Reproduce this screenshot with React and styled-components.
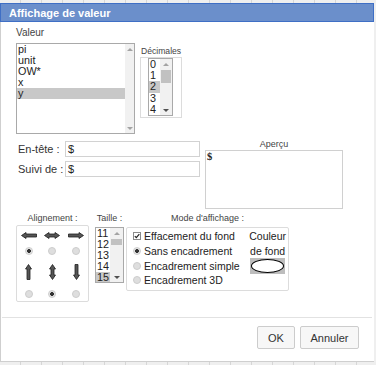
import React from 'react'
import styled, { createGlobalStyle } from 'styled-components'

const GlobalStyle = createGlobalStyle`
    html, body {
        margin: 0;
        padding: 0;
    }
    body {
        width: 376px;
        height: 365px;
        overflow: hidden;
        background-color: #efefef;
        background-image: repeating-linear-gradient(90deg, transparent 0 20px, #d6d6d6 20px 21px);
        font-family: "Liberation Sans", Arial, sans-serif;
        -webkit-font-smoothing: antialiased;
    }
`

const valeurs = ['pi', 'unit', 'OW*', 'x', 'y']
const decimales = ['0', '1', '2', '3', '4']
const tailles = ['11', '12', '13', '14', '15']
const modes = [
    { label: 'Effacement du fond', kind: 'check' },
    { label: 'Sans encadrement', kind: 'radio', on: true },
    { label: 'Encadrement simple', kind: 'radio' },
    { label: 'Encadrement 3D', kind: 'radio' },
]

const arrowPaths = {
    left: 'M0.5 3.5 L5 0.5 L5 2 L15.5 2 L15.5 5 L5 5 L5 6.5 Z',
    both: 'M0.5 3.5 L5 0.5 L5 2 L11 2 L11 0.5 L15.5 3.5 L11 6.5 L11 5 L5 5 L5 6.5 Z',
    right: 'M15.5 3.5 L11 0.5 L11 2 L0.5 2 L0.5 5 L11 5 L11 6.5 Z',
    up: 'M3.5 0.5 L6.5 5 L5 5 L5 15.5 L2 15.5 L2 5 L0.5 5 Z',
    vboth: 'M3.5 0.5 L6.5 5 L5 5 L5 11 L6.5 11 L3.5 15.5 L0.5 11 L2 11 L2 5 L0.5 5 Z',
    down: 'M3.5 15.5 L6.5 11 L5 11 L5 0.5 L2 0.5 L2 11 L0.5 11 Z',
}

function Arrow({ dir }) {
    const vertical = dir === 'up' || dir === 'down' || dir === 'vboth'
    const w = vertical ? 7 : 16
    const h = vertical ? 16 : 7
    return (
        <svg width={w} height={h} viewBox={`0 0 ${w} ${h}`}>
            <path d={arrowPaths[dir]} fill="#555" stroke="#1f1f1f" strokeWidth="0.8" strokeLinejoin="round" />
        </svg>
    )
}

function ScrollBar({ width, thumbTop, thumbHeight, downDark }) {
    return (
        <Scroll width={width}>
            <ArrowCell><TriUp /></ArrowCell>
            <Track>
                {thumbHeight && <Thumb style={{ marginTop: thumbTop, height: thumbHeight }} />}
            </Track>
            <ArrowCell><TriDown dark={downDark} /></ArrowCell>
        </Scroll>
    )
}

function List({ items, selected, width, height, itemHeight, scrollWidth, thumbTop, thumbHeight, downDark }) {
    return (
        <ListBox width={width} height={height}>
            <Items>
                {items.map((it) => (
                    <Item key={it} h={itemHeight} active={it === selected}>{it}</Item>
                ))}
            </Items>
            <ScrollBar width={scrollWidth} thumbTop={thumbTop} thumbHeight={thumbHeight} downDark={downDark} />
        </ListBox>
    )
}

function App() {
    return (
        <>
            <GlobalStyle />
            <Page>
                <Dialog>
                    <TitleBar>Affichage de valeur</TitleBar>
                    <Body>
                        <TopRow>
                            <Column>
                                <Caption size={10}>Valeur</Caption>
                                <List items={valeurs} selected="y" width={119} height={91} itemHeight={11} scrollWidth={9} />
                            </Column>
                            <DecimalesCol>
                                <Caption size={8.6}>Décimales</Caption>
                                <Frame width={42} height={61} pad="0 0 0 7px">
                                    <List items={decimales} selected="2" width={25} height={58} itemHeight={11.2} scrollWidth={12} thumbTop={1} thumbHeight={13} downDark />
                                </Frame>
                            </DecimalesCol>
                        </TopRow>

                        <MidRow>
                            <Fields>
                                <FieldRow>
                                    <FieldLabel>En-tête :</FieldLabel>
                                    <TextInput>$</TextInput>
                                </FieldRow>
                                <FieldRow>
                                    <FieldLabel>Suivi de :</FieldLabel>
                                    <TextInput>$</TextInput>
                                </FieldRow>
                            </Fields>
                            <PreviewCol>
                                <SmallCaption>Aperçu</SmallCaption>
                                <Preview>$</Preview>
                            </PreviewCol>
                        </MidRow>

                        <BottomRow>
                            <Group>
                                <SmallCaption>Alignement :</SmallCaption>
                                <AlignBox>
                                    <Cell><Arrow dir="left" /></Cell>
                                    <Cell><Arrow dir="both" /></Cell>
                                    <Cell><Arrow dir="right" /></Cell>
                                    <Cell><Radio on /></Cell>
                                    <Cell><Radio /></Cell>
                                    <Cell><Radio /></Cell>
                                    <Cell><Arrow dir="up" /></Cell>
                                    <Cell><Arrow dir="vboth" /></Cell>
                                    <Cell><Arrow dir="down" /></Cell>
                                    <Cell><Radio /></Cell>
                                    <Cell><Radio on /></Cell>
                                    <Cell><Radio /></Cell>
                                </AlignBox>
                            </Group>
                            <Group gapLeft={6}>
                                <SmallCaption>Taille :</SmallCaption>
                                <Spacer h={3} />
                                <List items={tailles} selected="15" width={29} height={56} itemHeight={11} scrollWidth={13} thumbTop={1} thumbHeight={6} downDark />
                            </Group>
                            <Group gapLeft={2}>
                                <SmallCaption>Mode d'affichage :</SmallCaption>
                                <ModeBox>
                                    <ModeList>
                                        {modes.map((m) => (
                                            <ModeRow key={m.label}>
                                                {m.kind === 'check' ? (
                                                    <svg width="8" height="8" viewBox="0 0 8 8">
                                                        <rect x="0.5" y="0.5" width="7" height="7" fill="#fff" stroke="#8a8a8a" />
                                                        <path d="M1.8 4.2 L3.3 5.7 L6.3 2.2" fill="none" stroke="#222" strokeWidth="1.2" />
                                                    </svg>
                                                ) : (
                                                    <Radio on={m.on} />
                                                )}
                                                <span>{m.label}</span>
                                            </ModeRow>
                                        ))}
                                    </ModeList>
                                    <ColorCol>
                                        <ModeRow>Couleur</ModeRow>
                                        <ModeRow>de fond</ModeRow>
                                        <Swatch><Ellipse /></Swatch>
                                    </ColorCol>
                                </ModeBox>
                            </Group>
                        </BottomRow>
                    </Body>
                    <Separator />
                    <Footer>
                        <Button w={38}>OK</Button>
                        <Button w={59}>Annuler</Button>
                    </Footer>
                </Dialog>
            </Page>
        </>
    )
}

const Page = styled.div`
    padding-top: 3px;
`
const Dialog = styled.div`
    width: 374px;
    box-sizing: border-box;
    background: #fff;
    border-left: 1px solid #cfcfcf;
    border-bottom: 1px solid #cfcfcf;
    display: flex;
    flex-direction: column;
`
const TitleBar = styled.div`
    height: 19px;
    box-sizing: border-box;
    margin-left: -1px;
    background: #6b8fcb;
    border: 1px solid #3f6fc5;
    color: #fff;
    font-size: 11px;
    font-weight: bold;
    padding-left: 8px;
    display: flex;
    align-items: center;
`
const Body = styled.div`
    padding: 5px 0 0 15px;
`
const TopRow = styled.div`
    display: flex;
    align-items: flex-start;
`
const Column = styled.div`
    display: flex;
    flex-direction: column;
`
const Caption = styled.div`
    font-size: ${p => p.size}px;
    line-height: 12px;
    height: 12px;
    color: #444;
    margin-bottom: ${p => (p.size >= 10 ? 4 : 0)}px;
    margin-left: ${p => (p.size >= 10 ? 0 : 1)}px;
`
const DecimalesCol = styled.div`
    display: flex;
    flex-direction: column;
    margin-left: 5px;
    padding-top: 18px;
`
const Frame = styled.div`
    width: ${p => p.width}px;
    height: ${p => p.height}px;
    box-sizing: border-box;
    border: 1px solid #dcdcdc;
    padding: ${p => p.pad};
`
const ListBox = styled.div`
    width: ${p => p.width}px;
    height: ${p => p.height}px;
    box-sizing: border-box;
    border: 1px solid #a9a9a9;
    background: #fff;
    display: flex;
    overflow: hidden;
`
const Items = styled.div`
    flex: 1;
    display: flex;
    flex-direction: column;
    overflow: hidden;
`
const Item = styled.div`
    flex: none;
    height: ${p => p.h}px;
    line-height: ${p => p.h}px;
    font-size: 10.8px;
    color: #222;
    padding-left: 1px;
    white-space: nowrap;
    background: ${p => (p.active ? '#c8c8c8' : 'transparent')};
`
const Scroll = styled.div`
    width: ${p => p.width}px;
    flex: none;
    display: flex;
    flex-direction: column;
    background: #f1f1f1;
`
const ArrowCell = styled.div`
    height: 10px;
    flex: none;
    display: flex;
    align-items: center;
    justify-content: center;
`
const TriUp = styled.div`
    width: 0;
    height: 0;
    border-left: 3px solid transparent;
    border-right: 3px solid transparent;
    border-bottom: 3px solid #a3a3a3;
`
const TriDown = styled.div`
    width: 0;
    height: 0;
    border-left: 3px solid transparent;
    border-right: 3px solid transparent;
    border-top: 3px solid ${p => (p.dark ? '#505050' : '#a3a3a3')};
`
const Track = styled.div`
    flex: 1;
    display: flex;
    flex-direction: column;
    align-items: stretch;
    padding: 0 1px;
`
const Thumb = styled.div`
    background: #c1c1c1;
`
const MidRow = styled.div`
    display: flex;
    align-items: flex-start;
    margin-top: 5px;
`
const Fields = styled.div`
    display: flex;
    flex-direction: column;
    gap: 4px;
    padding: 2px 0 0 2px;
`
const FieldRow = styled.div`
    display: flex;
    align-items: center;
    height: 16px;
`
const FieldLabel = styled.div`
    width: 47px;
    font-size: 11px;
    color: #333;
`
const TextInput = styled.div`
    width: 135px;
    height: 16px;
    box-sizing: border-box;
    border: 1px solid #d2d2d2;
    font-size: 11px;
    line-height: 14px;
    padding-left: 2px;
    color: #222;
`
const PreviewCol = styled.div`
    display: flex;
    flex-direction: column;
    margin-left: 5px;
`
const SmallCaption = styled.div`
    font-size: 9px;
    line-height: 11px;
    height: 11px;
    color: #444;
    text-align: center;
    white-space: nowrap;
`
const Preview = styled.div`
    width: 138px;
    height: 59px;
    box-sizing: border-box;
    border: 1px solid #d0d0d0;
    padding: 0 1px;
    font-family: "Liberation Serif", serif;
    font-size: 10.5px;
    line-height: 12px;
    font-weight: bold;
    color: #222;
`
const BottomRow = styled.div`
    display: flex;
    align-items: flex-start;
    margin-top: 4px;
`
const Group = styled.div`
    display: flex;
    flex-direction: column;
    align-items: center;
    margin-left: ${p => p.gapLeft || 0}px;
`
const Spacer = styled.div`
    height: ${p => p.h}px;
`
const AlignBox = styled.div`
    margin-top: 1px;
    width: 73px;
    height: 77px;
    box-sizing: border-box;
    border: 1px solid #dcdcdc;
    border-radius: 2px;
    display: grid;
    grid-template-columns: repeat(3, 1fr);
    grid-template-rows: 18px 13px 30px 13px;
`
const Cell = styled.div`
    display: flex;
    align-items: center;
    justify-content: center;
`
const Radio = styled.span`
    width: 8px;
    height: 8px;
    box-sizing: border-box;
    border-radius: 50%;
    border: 1px solid #cdcdcd;
    background: ${p => (p.on
        ? 'radial-gradient(circle, #333 0 1.6px, #e4e4e4 2.2px)'
        : '#dedede')};
    flex: none;
`
const ModeBox = styled.div`
    margin-top: 3px;
    width: 163px;
    height: 64px;
    box-sizing: border-box;
    border: 1px solid #dcdcdc;
    border-radius: 2px;
    display: flex;
    justify-content: space-between;
    padding: 1px 2px 0 6px;
`
const ModeList = styled.div`
    display: flex;
    flex-direction: column;
`
const ModeRow = styled.div`
    height: 14.7px;
    display: flex;
    align-items: center;
    gap: 3px;
    font-size: 10.5px;
    color: #222;
    white-space: nowrap;
`
const ColorCol = styled.div`
    display: flex;
    flex-direction: column;
    align-items: center;
`
const Swatch = styled.div`
    width: 35px;
    height: 16px;
    background: #bdbdbd;
    display: flex;
    align-items: stretch;
    padding: 1px 1px;
    box-sizing: border-box;
`
const Ellipse = styled.div`
    flex: 1;
    background: #fff;
    border: 1px solid #000;
    border-radius: 50%;
`
const Separator = styled.div`
    height: 1px;
    background: #e2e2e2;
    margin: 15px 2px 0 1px;
`
const Footer = styled.div`
    display: flex;
    justify-content: flex-end;
    gap: 5px;
    padding: 8px 15px 12px 0;
`
const Button = styled.div`
    width: ${p => p.w}px;
    height: 23px;
    box-sizing: border-box;
    background: #f7f7f7;
    border: 1px solid #cccccc;
    border-radius: 2px;
    color: #333;
    font-size: 11px;
    display: flex;
    align-items: center;
    justify-content: center;
    cursor: pointer;
`

export default App
